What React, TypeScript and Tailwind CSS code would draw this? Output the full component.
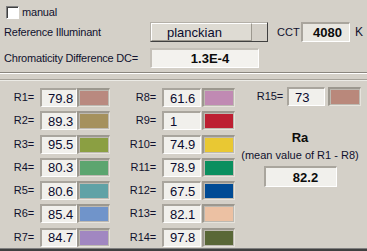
import React from "react";

const font = { fontFamily: '"Liberation Sans", Arial, sans-serif' };

type Row = [string, string, string];

const col1: Row[] = [
  ["R1=", "79.8", "#b9897f"],
  ["R2=", "89.3", "#a5915d"],
  ["R3=", "95.5", "#8b9f42"],
  ["R4=", "80.3", "#5ca56f"],
  ["R5=", "80.6", "#60a2a6"],
  ["R6=", "85.4", "#7094ca"],
  ["R7=", "84.7", "#a187c1"],
];
const col2: Row[] = [
  ["R8=", "61.6", "#c08ab3"],
  ["R9=", "1", "#bd1f32"],
  ["R10=", "74.9", "#e9c833"],
  ["R11=", "78.9", "#0a8f5f"],
  ["R12=", "67.5", "#004b95"],
  ["R13=", "82.1", "#ecc1a3"],
  ["R14=", "97.8", "#596737"],
];

function ValueBox({ value, w }: { value: string; w: string }) {
  return (
    <div
      className={`${w} h-[19px] bg-[#f1f0ec] border-t-2 border-l-2 border-t-[#a9a59d] border-l-[#a9a59d] border-b border-r border-b-white border-r-white flex items-center pl-[6px] text-[13px] text-[#0b0b2e] leading-none`}
    >
      {value}
    </div>
  );
}

function Swatch({ color }: { color: string }) {
  return (
    <div className="w-[33px] h-[19px] border-t-2 border-l-2 border-t-[#9c988f] border-l-[#9c988f] border-b border-r border-b-[#e6e3dc] border-r-[#e6e3dc] bg-[#bdb9b1] p-px">
      <div className="w-full h-full" style={{ backgroundColor: color }} />
    </div>
  );
}

function RRow({
  row,
  labelW,
  gap,
  boxW,
  swGap,
}: {
  row: Row;
  labelW: string;
  gap: string;
  boxW: string;
  swGap: string;
}) {
  return (
    <div className="flex items-center h-[19px]">
      <div className={`${labelW} text-right text-[11px] tracking-[-0.1px] text-[#10102e] leading-none`}>{row[0]}</div>
      <div className={gap} />
      <ValueBox value={row[1]} w={boxW} />
      <div className={swGap} />
      <Swatch color={row[2]} />
    </div>
  );
}

export default function App() {
  return (
    <div className="w-[367px] h-[251px] bg-[#d4d0c8] overflow-hidden flex flex-col" style={font}>
      {/* Upper panel */}
      <div className="h-[72px] flex flex-col">
        <div className="flex items-center pl-[6px] pt-[6px] h-[19px]">
          <div className="w-[13px] h-[13px] bg-white border-t border-l border-t-[#808080] border-l-[#808080] border-b border-r border-b-white border-r-white shadow-[inset_1px_1px_0_#404040]" />
          <span className="ml-[3px] text-[11px] tracking-[-0.2px] text-[#10102e] leading-none">manual</span>
        </div>
        <div className="flex items-center h-[20px] mt-[3px]">
          <div className="w-[150px] pl-[4px] text-[11px] tracking-[-0.2px] text-[#10102e] leading-none">Reference Illuminant</div>
          <div className="w-[118px] h-[20px] flex border-t border-l border-t-[#b4b0a8] border-l-[#b4b0a8] border-b border-r border-b-[#404040] border-r-[#404040] bg-[#d4d0c8]">
            <div className="flex-1 border-t border-l border-t-white border-l-white border-b border-b-[#9c988f] bg-[#dedbd3] flex items-center pl-[15px] text-[13px] text-[#0b0b2e] leading-none">
              planckian
            </div>
            <div className="w-[16px] border-l border-l-[#9c988f] border-t border-t-white bg-[#d4d0c8]" />
          </div>
          <div className="w-[33px] pl-[9px] text-[11px] text-[#10102e] leading-none">CCT</div>
          <div className="w-[49px] h-[20px] bg-[#e9e7e1] border-t-2 border-l-2 border-t-[#a9a59d] border-l-[#a9a59d] border-b border-r border-b-white border-r-white flex items-center justify-end pr-[7px] text-[13px] font-bold text-[#0b0b0b] leading-none">
            4080
          </div>
          <div className="pl-[5px] text-[12px] text-[#10102e] leading-none">K</div>
        </div>
        <div className="flex items-center h-[20px] mt-[6px]">
          <div className="w-[150px] pl-[4px] text-[11px] tracking-[-0.2px] text-[#10102e] leading-none whitespace-nowrap">
            Chromaticity Difference DC=
          </div>
          <div className="w-[109px] h-[20px] bg-[#f3f2ee] border-t-2 border-l-2 border-t-[#c4c0b8] border-l-[#c4c0b8] border-b border-r border-b-white border-r-white flex items-center justify-center pl-[10px] text-[13px] font-bold text-[#0b0b0b] leading-none">
            1.3E-4
          </div>
        </div>
      </div>
      <div className="h-px bg-[#8a867e]" />
      <div className="h-px bg-white" />
      <div className="h-[5px]" />
      <div className="h-px bg-[#a6a29a]" />
      <div className="h-px bg-[#ecebe6]" />

      {/* Lower panel */}
      <div className="flex-1 flex pt-[7px]">
        <div className="flex flex-col gap-[4.3px]">
          {col1.map((r) => (
            <RRow key={r[0]} row={r} labelW="w-[34px]" gap="w-[6px]" boxW="w-[37px]" swGap="w-0" />
          ))}
        </div>
        <div className="flex flex-col gap-[4.3px]">
          {col2.map((r) => (
            <RRow key={r[0]} row={r} labelW="w-[46px]" gap="w-[6px]" boxW="w-[39px]" swGap="w-px" />
          ))}
        </div>
        <div className="flex flex-col">
          <div className="-mt-px">
            <RRow row={["R15=", "73", "#b9887b"]} labelW="w-[48px]" gap="w-[4px]" boxW="w-[38px]" swGap="w-[3px]" />
          </div>
          <div className="ml-[5px] w-[120px] flex flex-col items-center mt-[24px]">
            <div className="text-[13px] font-bold text-[#0b0b0b] leading-[15px]">Ra</div>
            <div className="mt-[4px] text-[11px] text-[#10102e] leading-[13px] whitespace-nowrap">
              (mean value of R1 - R8)
            </div>
            <div className="mt-[4px] w-[73px] h-[21px] bg-[#f1f0ec] border-t-2 border-l-2 border-t-[#a9a59d] border-l-[#a9a59d] border-b border-r border-b-white border-r-white flex items-center justify-center pl-[10px] text-[13px] font-bold text-[#0b0b0b] leading-none">
              82.2
            </div>
          </div>
        </div>
      </div>
      <div className="h-px bg-[#808080]" />
      <div className="h-[2px] bg-[#404040]" />
    </div>
  );
}
